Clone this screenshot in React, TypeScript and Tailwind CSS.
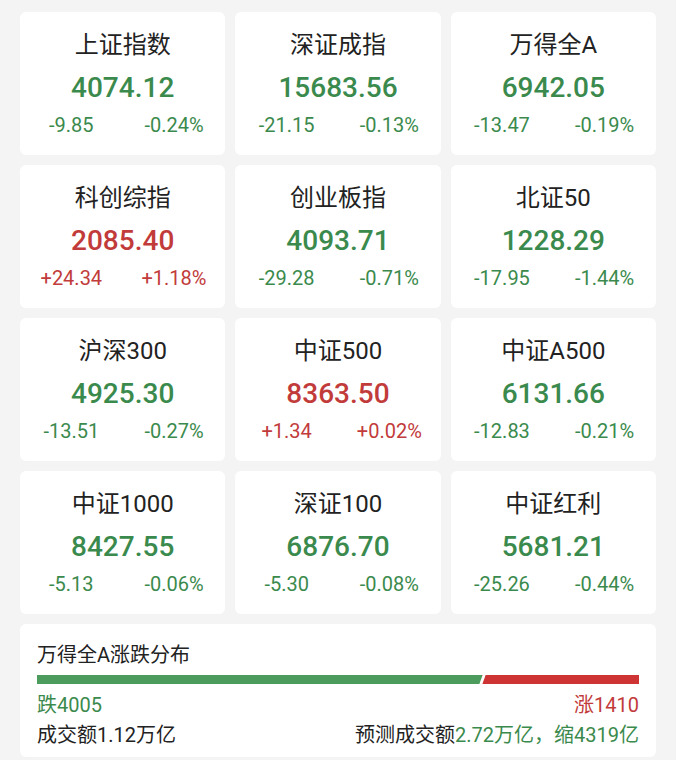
const FONT = { fontFamily: 'Roboto, "Noto Sans CJK SC", sans-serif' };

type Idx = { name: string; value: string; chg: string; pct: string; up: boolean };

const INDICES: Idx[] = [
  { name: "上证指数", value: "4074.12", chg: "-9.85", pct: "-0.24%", up: false },
  { name: "深证成指", value: "15683.56", chg: "-21.15", pct: "-0.13%", up: false },
  { name: "万得全A", value: "6942.05", chg: "-13.47", pct: "-0.19%", up: false },
  { name: "科创综指", value: "2085.40", chg: "+24.34", pct: "+1.18%", up: true },
  { name: "创业板指", value: "4093.71", chg: "-29.28", pct: "-0.71%", up: false },
  { name: "北证50", value: "1228.29", chg: "-17.95", pct: "-1.44%", up: false },
  { name: "沪深300", value: "4925.30", chg: "-13.51", pct: "-0.27%", up: false },
  { name: "中证500", value: "8363.50", chg: "+1.34", pct: "+0.02%", up: true },
  { name: "中证A500", value: "6131.66", chg: "-12.83", pct: "-0.21%", up: false },
  { name: "中证1000", value: "8427.55", chg: "-5.13", pct: "-0.06%", up: false },
  { name: "深证100", value: "6876.70", chg: "-5.30", pct: "-0.08%", up: false },
  { name: "中证红利", value: "5681.21", chg: "-25.26", pct: "-0.44%", up: false },
];

function IndexCard({ d }: { d: Idx }) {
  const color = d.up ? "text-[#c23b3b]" : "text-[#3b8a4d]";
  return (
    <div className="h-[143px] bg-white rounded-md flex flex-col items-center pt-[19px]">
      <p className="text-[24px] leading-[28px] text-[#222]">{d.name}</p>
      <p className={`mt-[12px] text-[28px] leading-[34px] font-medium ${color}`}>{d.value}</p>
      <div className={`mt-[8px] w-full grid grid-cols-2 text-center text-[20px] leading-[24px] ${color}`}>
        <span>{d.chg}</span>
        <span>{d.pct}</span>
      </div>
    </div>
  );
}

export default function App() {
  const down = 4005;
  const up = 1410;
  const downPct = (down / (down + up)) * 100;

  return (
    <div className="w-[676px] h-[760px] bg-[#f4f4f4] px-5 pt-3 overflow-hidden" style={FONT}>
      <div className="grid grid-cols-3 gap-[10px]">
        {INDICES.map(d => (
          <IndexCard key={d.name} d={d} />
        ))}
      </div>

      {/* 涨跌分布 */}
      <div className="mt-[10px] bg-white rounded-md px-[17px] pt-[18px] pb-[10px]">
        <p className="text-[20px] leading-[26px] text-[#222]">万得全A涨跌分布</p>
        <div className="relative mt-[7px] flex h-[9px]">
          <div className="h-full bg-[#4c9c5e]" style={{ width: `${downPct}%` }} />
          <div className="h-full flex-1 bg-[#cf3434]" />
          <div
            className="absolute top-0 h-full w-[3px] bg-white skew-x-[-20deg]"
            style={{ left: `calc(${downPct}% - 1px)` }}
          />
        </div>
        <div className="mt-[9px] flex justify-between text-[20px] leading-[24px]">
          <span className="text-[#3b8a4d]">跌{down}</span>
          <span className="text-[#c23b3b]">涨{up}</span>
        </div>
        <div className="mt-[6px] flex justify-between text-[20px] leading-[24px] text-[#222]">
          <span>成交额1.12万亿</span>
          <span>
            预测成交额<span className="text-[#3b8a4d]">2.72万亿，缩4319亿</span>
          </span>
        </div>
      </div>
    </div>
  );
}
